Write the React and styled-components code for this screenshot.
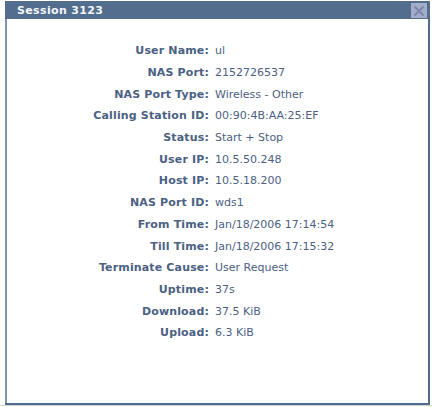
import React from 'react';
import styled, { createGlobalStyle } from 'styled-components';

const GlobalStyle = createGlobalStyle`
  html, body {
    margin: 0;
    padding: 0;
    background: #ffffff;
  }
`;

const colors = {
  title: '#526d8d',
  borderLight: '#7a93b3',
  borderDark: '#4f6a8b',
  text: '#4b6183',
};

const Page = styled.div`
  width: 432px;
  height: 406px;
  padding-top: 1px;
  box-sizing: border-box;
  border-bottom: 1px solid #d4d4d4;
  font-family: 'DejaVu Sans', sans-serif;
`;

const Window = styled.div`
  margin-left: 5px;
  width: 425px;
  height: 404px;
  box-sizing: border-box;
  display: flex;
  flex-direction: column;
  border-bottom: 2px solid ${colors.borderDark};
`;

const TitleBar = styled.div`
  height: 18px;
  background: ${colors.title};
  display: flex;
  align-items: center;
  justify-content: space-between;
  padding: 0 3px 0 12px;
`;

const Title = styled.span`
  color: #f4f6fa;
  font-weight: bold;
  font-size: 11px;
  letter-spacing: 0.35px;
`;

const CloseButton = styled.div`
  width: 16px;
  height: 15px;
  background: #a3adcb;
  display: flex;
  align-items: center;
  justify-content: center;
  margin-top: 1px;
`;

const Body = styled.div`
  flex: 1;
  border-left: 2px solid ${colors.borderLight};
  border-right: 2px solid ${colors.borderDark};
  padding-top: 21px;
`;

const Details = styled.dl`
  margin: 0;
  display: grid;
  grid-template-columns: 202px 1fr;
  column-gap: 6px;
  grid-auto-rows: 21.7px;
  align-items: center;
  font-size: 11px;
  color: ${colors.text};
`;

const Label = styled.dt`
  text-align: right;
  font-weight: bold;
  letter-spacing: 0.15px;
`;

const Value = styled.dd`
  margin: 0;
`;

const rows = [
  ['User Name', 'ul'],
  ['NAS Port', '2152726537'],
  ['NAS Port Type', 'Wireless - Other'],
  ['Calling Station ID', '00:90:4B:AA:25:EF'],
  ['Status', 'Start + Stop'],
  ['User IP', '10.5.50.248'],
  ['Host IP', '10.5.18.200'],
  ['NAS Port ID', 'wds1'],
  ['From Time', 'Jan/18/2006 17:14:54'],
  ['Till Time', 'Jan/18/2006 17:15:32'],
  ['Terminate Cause', 'User Request'],
  ['Uptime', '37s'],
  ['Download', '37.5 KiB'],
  ['Upload', '6.3 KiB'],
];

const App = () => (
  <Page>
    <GlobalStyle />
    <Window>
      <TitleBar>
        <Title>Session 3123</Title>
        <CloseButton>
          <svg width="12" height="12" viewBox="0 0 12 12">
            <path d="M1.5 1.5 L10.5 10.5 M10.5 1.5 L1.5 10.5" stroke="#7b88a8" strokeWidth="2.2" />
          </svg>
        </CloseButton>
      </TitleBar>
      <Body>
        <Details>
          {rows.map(([label, value]) => (
            <React.Fragment key={label}>
              <Label>{label}:</Label>
              <Value>{value}</Value>
            </React.Fragment>
          ))}
        </Details>
      </Body>
    </Window>
  </Page>
);

export default App;
